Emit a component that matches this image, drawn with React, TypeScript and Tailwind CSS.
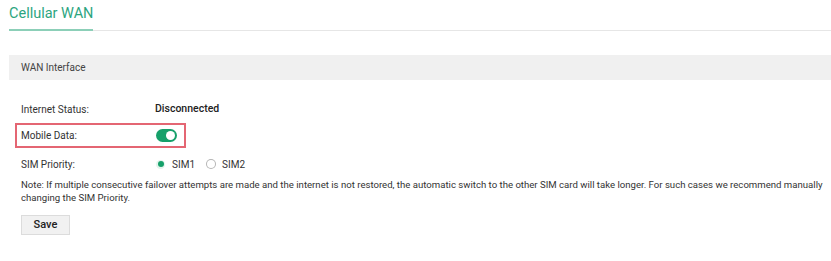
export default function App() {
  return (
    <div className="h-[261px] w-[831px] bg-white text-[#333] [font-family:Roboto,'Noto_Sans',sans-serif]">
      <div className="flex items-end pl-[9px]">
        <div className="border-b-2 border-[#8ccfb8] pb-[5px] pt-[4px] text-[14.5px] leading-[20px] text-[#2ca57f]">
          Cellular WAN
        </div>
        <div className="flex-1 border-b border-[#e6e6e6]" />
      </div>

      <div className="ml-[9px] mt-[24px] flex h-[25px] items-center bg-[#f0f0f0] pl-[12px] text-[10px] text-[#444]">
        WAN Interface
      </div>

      <div className="pl-[21px] pr-[5px] pt-[22px] text-[10px]">
        <div className="flex h-[14px] items-center">
          <span className="w-[134px]">Internet Status:</span>
          <span className="text-[10.5px] font-medium text-[#222]">Disconnected</span>
        </div>

        <div className="-ml-[6px] mt-[7px] w-[171px] border-2 border-solid border-[#e46673]">
          <div className="flex h-[21px] items-center bg-white pl-[4px]">
            <span className="w-[135px]">Mobile Data:</span>
            <span className="flex h-[13px] w-[21px] items-center justify-end rounded-full bg-[#16a06a] pr-[2px]">
              <span className="h-[9px] w-[9px] rounded-full bg-white" />
            </span>
          </div>
        </div>

        <div className="mt-[9px] flex h-[14px] items-center">
          <span className="w-[135px]">SIM Priority:</span>
          <span className="flex items-center gap-[7px]">
            <span className="flex h-[9px] w-[9px] items-center justify-center rounded-full bg-[#e3f4ec]">
              <span className="h-[6px] w-[6px] rounded-full bg-[#16a06a]" />
            </span>
            <span>SIM1</span>
          </span>
          <span className="ml-[11px] flex items-center gap-[6px]">
            <span className="flex h-[10px] w-[10px] items-center justify-center rounded-full bg-[#b5b5b5]">
              <span className="h-[8px] w-[8px] rounded-full bg-white" />
            </span>
            <span>SIM2</span>
          </span>
        </div>

        <p className="mt-[7px] text-[9.6px] leading-[13px]">
          Note: If multiple consecutive failover attempts are made and the internet is not restored, the automatic switch to the other SIM card will take longer. For such cases we recommend manually changing the SIM Priority.
        </p>

        <button className="mt-[11px] h-[20px] w-[49px] bg-[#dcdcdc] p-px text-[11px] font-medium text-[#222]">
          <span className="flex h-full w-full items-center justify-center bg-[#f1f1f1]">Save</span>
        </button>
      </div>
    </div>
  );
}
